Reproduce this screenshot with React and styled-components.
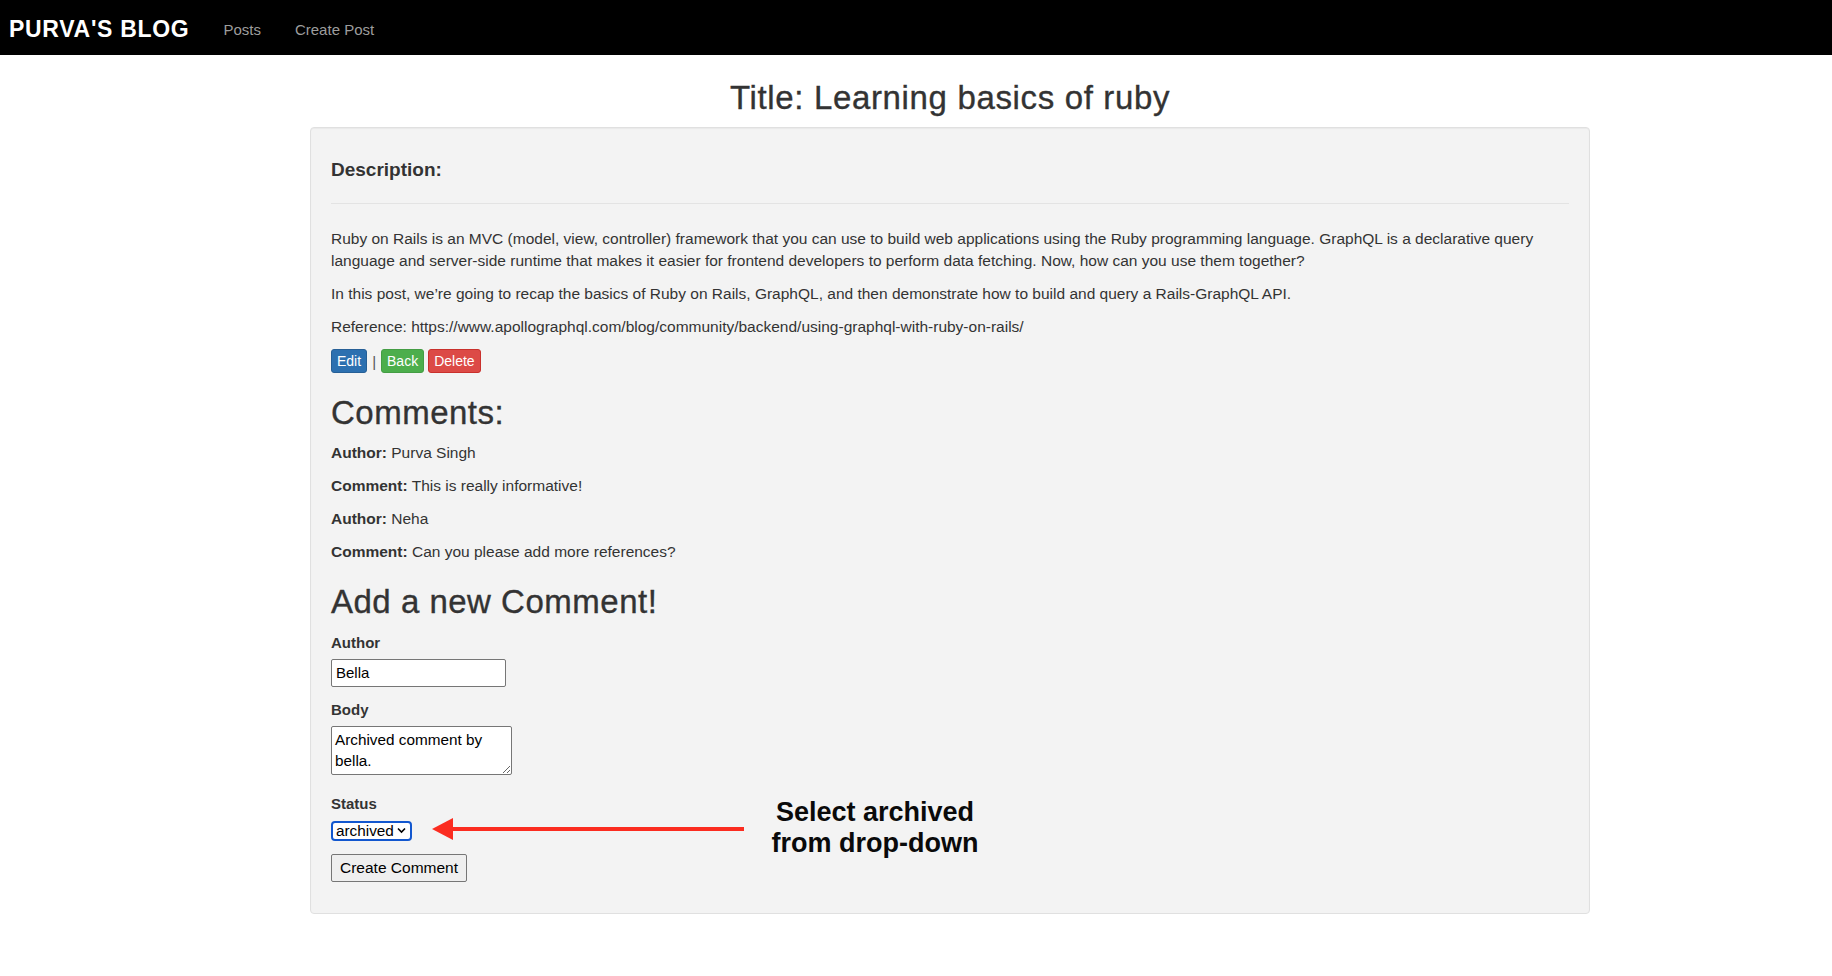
import React from "react";
import styled, { createGlobalStyle } from "styled-components";

const GlobalStyle = createGlobalStyle`
  body {
    margin: 0;
    background: #fff;
    font-family: "Liberation Sans", Arial, sans-serif;
    color: #333;
  }
`;

const Navbar = styled.nav`
  height: 55px;
  background: #000;
  display: flex;
  align-items: center;
  padding-left: 9px;
  padding-top: 4px;
  box-sizing: border-box;
`;

const Brand = styled.a`
  color: #fff;
  font-weight: bold;
  font-size: 23px;
  letter-spacing: 0.7px;
  margin-right: 34px;
  text-decoration: none;
`;

const NavLink = styled.a`
  color: #9d9d9d;
  font-size: 15px;
  margin-right: 34px;
  text-decoration: none;
`;

const Container = styled.div`
  margin-left: 310px;
  width: 1280px;
`;

const Title = styled.h2`
  margin: 25px 0 11px;
  text-align: center;
  font-size: 33px;
  letter-spacing: 0.65px;
  line-height: 1.1;
  font-weight: 500;
  -webkit-text-stroke: 0.35px #333;
`;

const Well = styled.div`
  position: relative;
  background: #f3f3f3;
  border: 1px solid #e0e0e0;
  border-radius: 4px;
  box-shadow: inset 0 1px 1px rgba(0, 0, 0, 0.04);
  padding: 32px 20px 31px;
`;

const SubHead = styled.h4`
  margin: 0;
  font-size: 19px;
  font-weight: bold;
  line-height: 1.1;
`;

const Rule = styled.hr`
  border: 0;
  border-top: 1px solid #e3e3e3;
  margin: 22px 0 24px;
`;

const Para = styled.p`
  margin: 0 0 11px;
  font-size: 15.5px;
  line-height: 22px;
`;

const Actions = styled.div`
  display: flex;
  align-items: center;
  margin-top: 10px;
  font-size: 15px;
`;

const Divider = styled.span`
  margin: 0 5px;
  color: #555;
`;

const colors = {
  primary: ["#2c70b0", "#265f96"],
  success: ["#4cae4c", "#449d44"],
  danger: ["#dc4a46", "#c9302c"],
};

const SmallButton = styled.button`
  font-family: inherit;
  font-size: 14px;
  line-height: 20px;
  padding: 1px 5px;
  color: #fff;
  background: ${(p) => colors[p.$kind][0]};
  border: 1px solid ${(p) => colors[p.$kind][1]};
  border-radius: 3px;
  margin-right: ${(p) => (p.$gap ? p.$gap : 0)}px;
  cursor: pointer;
`;

const Heading = styled.h2`
  margin: ${(p) => p.$top}px 0 11px;
  font-size: 33px;
  letter-spacing: 0.5px;
  line-height: 1.1;
  font-weight: 500;
  -webkit-text-stroke: 0.35px #333;
`;

const Field = styled.div`
  margin-bottom: ${(p) => p.$after}px;
`;

const Label = styled.label`
  display: block;
  font-size: 15px;
  font-weight: bold;
  line-height: 22px;
  margin-bottom: ${(p) => p.$gap}px;
`;

const TextInput = styled.input`
  display: block;
  box-sizing: border-box;
  width: 175px;
  height: 28px;
  padding: 1px 4px;
  font-family: inherit;
  font-size: 15px;
  color: #000;
  background: #fff;
  border: 1px solid #767676;
  border-radius: 2px;
`;

const TextArea = styled.textarea`
  display: block;
  box-sizing: border-box;
  width: 181px;
  height: 49px;
  padding: 2px 3px;
  font-family: inherit;
  font-size: 15.3px;
  line-height: 21px;
  color: #000;
  background: #fff;
  border: 1px solid #767676;
  border-radius: 2px;
`;

const SelectWrap = styled.div`
  position: relative;
  width: 81px;
  height: 20px;
`;

const Select = styled.select`
  appearance: none;
  box-sizing: border-box;
  width: 81px;
  height: 20px;
  padding: 0 0 0 3px;
  font-family: inherit;
  font-size: 15.3px;
  line-height: 16px;
  color: #000;
  background: #fff;
  border: 2px solid #1257cf;
  border-radius: 4px;
  outline: none;
`;

const Chevron = styled.svg`
  position: absolute;
  right: 6px;
  top: 6px;
  pointer-events: none;
`;

const SubmitButton = styled.button`
  height: 28px;
  padding: 0 8px;
  font-family: inherit;
  font-size: 15.5px;
  color: #000;
  background: #efefef;
  border: 1px solid #767676;
  border-radius: 2px;
`;

const Arrow = styled.svg`
  position: absolute;
  left: 121px;
  top: 690px;
`;

const Callout = styled.div`
  position: absolute;
  left: 449px;
  top: 669px;
  width: 230px;
  text-align: center;
  font-size: 27px;
  font-weight: bold;
  line-height: 31px;
  color: #0a0a0a;
`;

const comments = [
  { author: "Purva Singh", body: "This is really informative!" },
  { author: "Neha", body: "Can you please add more references?" },
];

const App = () => {
  return (
    <>
      <GlobalStyle />
      <Navbar>
        <Brand href="#">PURVA'S BLOG</Brand>
        <NavLink href="#">Posts</NavLink>
        <NavLink href="#">Create Post</NavLink>
      </Navbar>
      <Container>
        <Title>Title: Learning basics of ruby</Title>
        <Well>
          <SubHead>Description:</SubHead>
          <Rule />
          <Para>
            Ruby on Rails is an MVC (model, view, controller) framework that you can use to build web
            applications using the Ruby programming language. GraphQL is a declarative query language and
            server-side runtime that makes it easier for frontend developers to perform data fetching. Now, how
            can you use them together?
          </Para>
          <Para>
            In this post, we’re going to recap the basics of Ruby on Rails, GraphQL, and then demonstrate how to
            build and query a Rails-GraphQL API.
          </Para>
          <Para>Reference: https://www.apollographql.com/blog/community/backend/using-graphql-with-ruby-on-rails/</Para>
          <Actions>
            <SmallButton $kind="primary">Edit</SmallButton>
            <Divider>|</Divider>
            <SmallButton $kind="success" $gap={4}>
              Back
            </SmallButton>
            <SmallButton $kind="danger">Delete</SmallButton>
          </Actions>

          <Heading $top={22}>Comments:</Heading>
          {comments.map((c) => (
            <React.Fragment key={c.author}>
              <Para>
                <strong>Author:</strong> {c.author}
              </Para>
              <Para>
                <strong>Comment:</strong> {c.body}
              </Para>
            </React.Fragment>
          ))}

          <Heading $top={21}>Add a new Comment!</Heading>
          <Field $after={12}>
            <Label $gap={5}>Author</Label>
            <TextInput defaultValue="Bella" />
          </Field>
          <Field $after={18}>
            <Label $gap={5}>Body</Label>
            <TextArea defaultValue="Archived comment by bella." />
          </Field>
          <Field $after={13}>
            <Label $gap={6}>Status</Label>
            <SelectWrap>
              <Select defaultValue="archived">
                <option value="published">published</option>
                <option value="archived">archived</option>
              </Select>
              <Chevron width="9" height="7" viewBox="0 0 9 7">
                <path d="M1 1.5 L4.5 5 L8 1.5" fill="none" stroke="#000" strokeWidth="1.6" />
              </Chevron>
            </SelectWrap>
          </Field>
          <SubmitButton>Create Comment</SubmitButton>

          <Arrow width="312" height="22" viewBox="0 0 312 22">
            <polygon points="0,11 21,0 21,22" fill="#fb2c20" />
            <rect x="18" y="9" width="294" height="4" fill="#fb2c20" />
          </Arrow>
          <Callout>
            Select archived
            <br />
            from drop-down
          </Callout>
        </Well>
      </Container>
    </>
  );
};

export default App;
